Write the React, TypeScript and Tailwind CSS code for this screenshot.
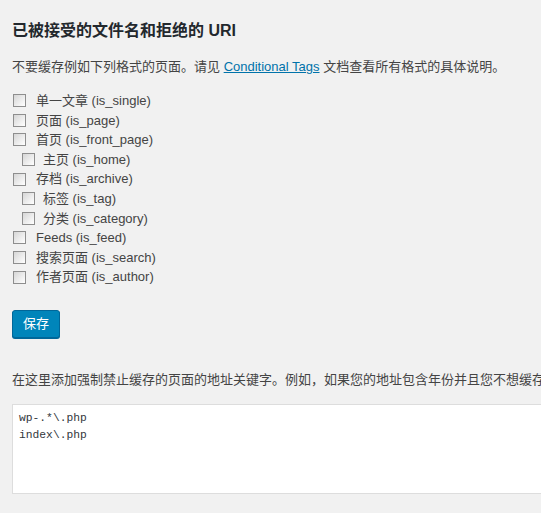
import { useState } from 'react';

const PAGES = [
  { id: 'single', label: '单一文章 (is_single)', sub: false },
  { id: 'pages', label: '页面 (is_page)', sub: false },
  { id: 'frontpage', label: '首页 (is_front_page)', sub: false },
  { id: 'home', label: '主页 (is_home)', sub: true },
  { id: 'archives', label: '存档 (is_archive)', sub: false },
  { id: 'tag', label: '标签 (is_tag)', sub: true },
  { id: 'category', label: '分类 (is_category)', sub: true },
  { id: 'feed', label: 'Feeds (is_feed)', sub: false },
  { id: 'search', label: '搜索页面 (is_search)', sub: false },
  { id: 'author', label: '作者页面 (is_author)', sub: false },
];

const FONT = "font-['Liberation_Sans','Noto_Sans_CJK_SC',sans-serif]";

export default function App() {
  const [checked, setChecked] = useState<Record<string, boolean>>({});
  const [rejected, setRejected] = useState('wp-.*\\.php\nindex\\.php');

  return (
    <div className={`min-h-screen overflow-hidden bg-[#f1f1f1] pl-3 text-[13px] text-[#444] ${FONT}`}>
      <h2 className="pt-[21px] text-[16px] font-bold leading-5 text-[#23282d]">已被接受的文件名和拒绝的 URI</h2>

      <p className="mt-4 leading-5">
        不要缓存例如下列格式的页面。请见{' '}
        <a href="#" className="text-[#0073aa] underline">Conditional Tags</a>{' '}
        文档查看所有格式的具体说明。
      </p>

      {/* page types */}
      <div className="mt-[14px]">
        {PAGES.map(p => (
          <label key={p.id} className={`flex h-[19.6px] items-center ${p.sub ? 'pl-[10px]' : 'pl-px'}`}>
            <input
              type="checkbox"
              checked={!!checked[p.id]}
              onChange={e => setChecked({ ...checked, [p.id]: e.target.checked })}
              className="h-[13px] w-[13px] appearance-none border border-[#8e8e8e] bg-gradient-to-br from-[#d6d6d6] to-white"
            />
            <span className={p.sub ? 'pl-[8px]' : 'pl-[10px]'}>{p.label}</span>
          </label>
        ))}
      </div>

      <button className="mt-[23px] h-[28px] w-[48px] rounded-[3px] border border-[#006799] bg-[#0085ba] text-[13px] text-white shadow-[0_1px_0_#006799]">
        保存
      </button>

      <p className="mt-[32px] whitespace-nowrap leading-5">
        在这里添加强制禁止缓存的页面的地址关键字。例如，如果您的地址包含年份并且您不想缓存那些页面，请添加年份，例如“2004”。
      </p>

      <textarea
        value={rejected}
        onChange={e => setRejected(e.target.value)}
        className="mt-[14px] block h-[90px] w-[620px] resize-none border border-[#ddd] bg-white px-[6px] pt-[5px] font-['Liberation_Mono',monospace] text-[11.3px] leading-[17px] text-[#32373c] outline-none"
      />
    </div>
  );
}
